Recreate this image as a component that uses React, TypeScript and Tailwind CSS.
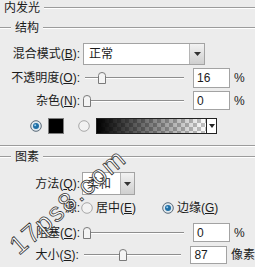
import React from "react";

const FONT = { fontFamily: '"Liberation Sans", "Noto Sans CJK SC", sans-serif' };

function Header({ title, indent }: { title: string; indent?: boolean }) {
  return (
    <div className="flex items-center h-[20px]">
      {indent ? <div className="w-[11px] h-[2px] border-t border-[#9c9c9c] border-b border-b-white" /> : null}
      <span className="ml-[4px]">{title}</span>
      <div className="flex-1 ml-[4px] h-[2px] border-t border-[#9c9c9c] border-b border-b-white" />
    </div>
  );
}

function Label({ text, hot }: { text: string; hot: string }) {
  return (
    <div className="w-[80px] text-right whitespace-nowrap">
      {text}(<span className="underline">{hot}</span>):
    </div>
  );
}

function Slider({ pos }: { pos: number }) {
  return (
    <div className="relative ml-[5px] w-[99px] h-[14px]">
      <div className="absolute left-0 right-0 top-[6px] h-[2px] border-t border-[#8e8e8e] border-b border-b-white" />
      <svg
        className="absolute top-[1px]"
        style={{ left: pos - 4 }}
        width="8"
        height="12"
        viewBox="0 0 8 12"
      >
        <path d="M0.5 11.5 V3.5 Q0.5 0.5 4 0.5 Q7.5 0.5 7.5 3.5 V11.5 Z" fill="#f4f4f4" stroke="#7a7a7a" />
      </svg>
    </div>
  );
}

function NumBox({ value, unit }: { value: string; unit: string }) {
  return (
    <>
      <div className="ml-[9px] w-[37px] h-full bg-white border border-[#a3a3a3] pl-[3px] flex items-center">{value}</div>
      <div className="ml-[4px] whitespace-nowrap">{unit}</div>
    </>
  );
}

function Radio({ on }: { on?: boolean }) {
  return (
    <svg width="12" height="12" viewBox="0 0 12 12">
      <circle cx="6" cy="6" r="5.3" fill={on ? "#dfe8ee" : "#f2f2f2"} stroke={on ? "#5a6a78" : "#a8a8a8"} strokeWidth="1" />
      {on ? <circle cx="6" cy="6" r="3" fill="#1f6fa6" /> : null}
      {on ? <circle cx="5.2" cy="5.2" r="1" fill="#9fd0ee" /> : null}
    </svg>
  );
}

function DropBtn({ w }: { w: string }) {
  return (
    <div className={`${w} h-full bg-gradient-to-b from-[#f2f2f2] to-[#cfcfcf] border-l border-[#b5b5b5] flex items-center justify-center`}>
      <svg width="7" height="4" viewBox="0 0 7 4">
        <path d="M0 0 H7 L3.5 4 Z" fill="#333" />
      </svg>
    </div>
  );
}

export default function App() {
  return (
    <div
      className="relative w-[255px] h-[267px] overflow-hidden bg-[#ececec] text-[12px] leading-none text-[#1b1b1b]"
      style={FONT}
    >
      <div className="-mt-[2px]">
        <Header title="内发光" />
      </div>
      <Header title="结构" indent />

      <div className="flex items-center h-[22px] mt-[5px]">
        <Label text="混合模式" hot="B" />
        <div className="ml-[3px] w-[122px] h-full bg-white border border-[#a3a3a3] flex items-center">
          <span className="flex-1 pl-[5px]">正常</span>
          <DropBtn w="w-[15px]" />
        </div>
      </div>

      <div className="flex items-center h-[20px] mt-[3px]">
        <Label text="不透明度" hot="O" />
        <Slider pos={17} />
        <NumBox value="16" unit="%" />
      </div>

      <div className="flex items-center h-[19px] mt-[3px]">
        <Label text="杂色" hot="N" />
        <Slider pos={2} />
        <NumBox value="0" unit="%" />
      </div>

      <div className="flex items-center h-[16px] mt-[8px]">
        <div className="ml-[30px]">
          <Radio on />
        </div>
        <div className="ml-[6px] w-[16px] h-[16px] bg-black border border-[#7d7d7d]" />
        <div className="ml-[14px]">
          <Radio />
        </div>
        <div className="ml-[6px] w-[121px] h-[16px] border border-[#222] flex">
          <div className="flex-1 bg-[linear-gradient(to_right,#000,rgba(0,0,0,0)),repeating-conic-gradient(#c4c4c4_0%_25%,#fff_0%_50%)] [background-size:100%_100%,8px_8px]" />
          <div className="w-[10px] bg-white border-l border-[#222] flex items-center justify-center">
            <svg width="6" height="4" viewBox="0 0 6 4">
              <path d="M0 0 H6 L3 4 Z" fill="#222" />
            </svg>
          </div>
        </div>
      </div>

      <div className="mt-[11px] h-[2px] border-t border-[#9c9c9c] border-b border-b-white" />
      <Header title="图素" indent />

      <div className="flex items-center h-[23px] mt-[5px]">
        <Label text="方法" hot="Q" />
        <div className="ml-[2px] w-[53px] h-full bg-white border border-[#a3a3a3] flex items-center">
          <span className="flex-1 pl-[4px]">柔和</span>
          <DropBtn w="w-[14px]" />
        </div>
      </div>

      <div className="flex items-center h-[16px] mt-[5px]">
        <div className="w-[80px] text-right">源:</div>
        <div className="ml-[1px] flex items-center">
          <Radio />
          <span className="ml-[3px]">
            居中(<span className="underline">E</span>)
          </span>
        </div>
        <div className="ml-[26px] flex items-center">
          <Radio on />
          <span className="ml-[3px]">
            边缘(<span className="underline">G</span>)
          </span>
        </div>
      </div>

      <div className="flex items-center h-[19px] mt-[7px]">
        <Label text="阻塞" hot="C" />
        <Slider pos={2} />
        <NumBox value="0" unit="%" />
      </div>

      <div className="flex items-center h-[18px] mt-[4px]">
        <Label text="大小" hot="S" />
        <Slider pos={39} />
        <NumBox value="87" unit="像素" />
      </div>

      <div className="absolute left-[13px] top-[236px] origin-left -rotate-[41deg] text-[26px] leading-none text-white [-webkit-text-stroke:0.8px_#333] tracking-[2px] whitespace-nowrap">
        17ps8.com
      </div>
    </div>
  );
}
